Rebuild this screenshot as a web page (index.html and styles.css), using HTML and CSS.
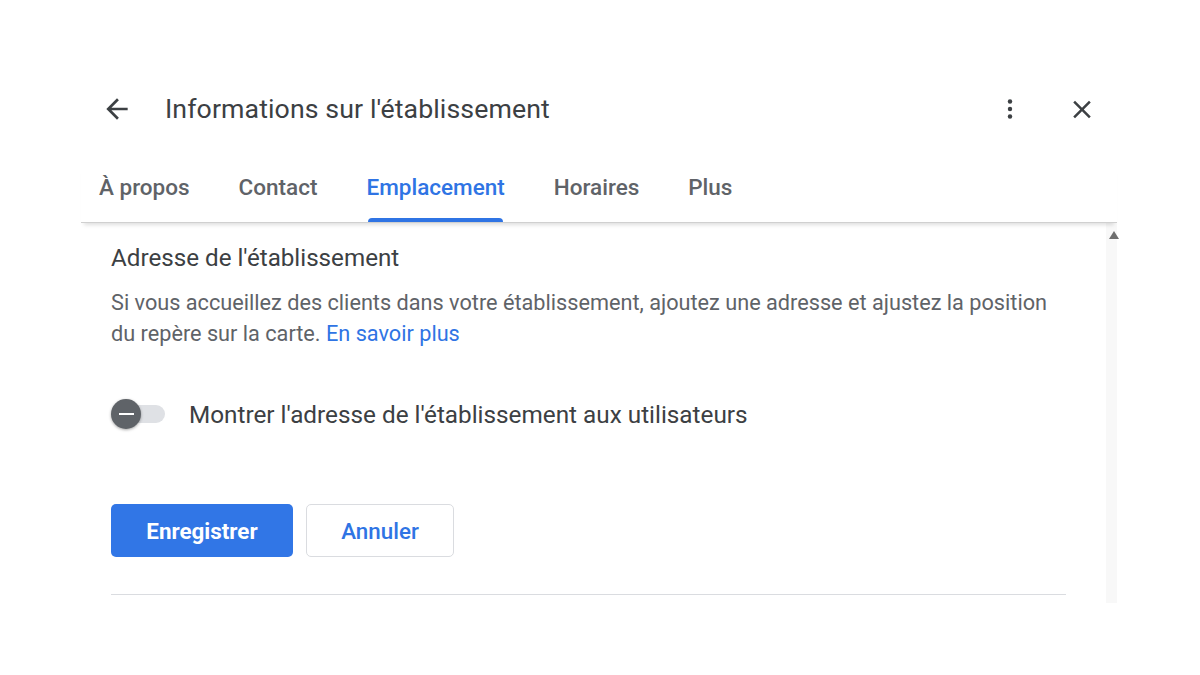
FILE: index.html
```html
<!DOCTYPE html>
<html lang="fr">
<head>
    <meta charset="UTF-8">
    <title>Informations sur l'établissement</title>
    <link rel="stylesheet" href="styles.css">
</head>
<body>
    <div class="dialog">
        <div class="header">
            <button class="icon-btn back" aria-label="Retour">
                <svg width="32" height="32" viewBox="0 0 24 24"><path d="M20 11H7.83l5.59-5.59L12 4l-8 8 8 8 1.41-1.41L7.83 13H20v-2z" fill="#3c4043"/></svg>
            </button>
            <h1 class="title">Informations sur l'établissement</h1>
            <button class="icon-btn more" aria-label="Plus d'options">
                <svg width="28" height="28" viewBox="0 0 24 24"><circle cx="12" cy="5.5" r="1.9" fill="#3c4043"/><circle cx="12" cy="12" r="1.9" fill="#3c4043"/><circle cx="12" cy="18.5" r="1.9" fill="#3c4043"/></svg>
            </button>
            <button class="icon-btn close" aria-label="Fermer">
                <svg width="31" height="31" viewBox="0 0 24 24"><path d="M19 6.41L17.59 5 12 10.59 6.41 5 5 6.41 10.59 12 5 17.59 6.41 19 12 13.41 17.59 19 19 17.59 13.41 12z" fill="#3c4043"/></svg>
            </button>
        </div>

        <div class="tabs">
            <div class="tab">À propos</div>
            <div class="tab">Contact</div>
            <div class="tab active">Emplacement</div>
            <div class="tab">Horaires</div>
            <div class="tab">Plus</div>
        </div>

        <div class="body">
            <div class="content">
                <h2 class="section-title">Adresse de l'établissement</h2>
                <p class="desc">Si vous accueillez des clients dans votre établissement, ajoutez une adresse et ajustez la position du repère sur la carte. <a href="#">En savoir plus</a></p>

                <div class="toggle-row">
                    <div class="switch">
                        <div class="track"></div>
                        <div class="knob"><span></span></div>
                    </div>
                    <span class="toggle-label">Montrer l'adresse de l'établissement aux utilisateurs</span>
                </div>

                <div class="actions">
                    <button class="btn primary">Enregistrer</button>
                    <button class="btn outline">Annuler</button>
                </div>

                <div class="divider"></div>
            </div>
            <div class="scrollbar">
                <div class="arrow-up"></div>
            </div>
        </div>
    </div>
</body>
</html>
```

FILE: styles.css
```css
* {
    margin: 0;
    padding: 0;
    box-sizing: border-box;
}

body {
    font-family: Roboto, "Noto Sans", Arial, sans-serif;
    background: #fff;
    color: #3c4043;
}

.dialog {
    width: 1036px;
    margin: 0 0 0 81px;
    padding-top: 89px;
}

.header {
    display: flex;
    align-items: center;
    height: 40px;
}

.icon-btn {
    background: none;
    border: none;
    display: flex;
    align-items: center;
    justify-content: center;
    cursor: pointer;
}

.back {
    margin-left: 19px;
    width: 34px;
}

.title {
    font-size: 26.7px;
    font-weight: 400;
    color: #3c4043;
    margin-left: 31px;
    flex-grow: 1;
    letter-spacing: 0.1px;
}

.more {
    width: 30px;
    margin-right: 42px;
}

.close {
    width: 30px;
    margin-right: 20px;
}

.tabs {
    display: flex;
    gap: 49px;
    padding-left: 18px;
    margin-top: 37px;
    height: 57px;
    border-bottom: 1px solid #d0d0d0;
    box-shadow: 0 5px 4px -3px rgba(0,0,0,0.13);
    position: relative;
    z-index: 1;
}

.tab {
    font-size: 22.5px;
    font-weight: 500;
    color: #5f6368;
    line-height: 42px;
    height: 56px;
    position: relative;
}

.tab.active {
    color: #2f74e4;
}

.tab.active::after {
    content: "";
    position: absolute;
    left: 2px;
    right: 2px;
    bottom: 0;
    height: 4px;
    background: #2f74e4;
    border-radius: 4px 4px 0 0;
}

.body {
    display: flex;
    height: 380px;
}

.content {
    flex-grow: 1;
    padding: 20px 40px 0 30px;
}

.section-title {
    font-size: 24.2px;
    font-weight: 400;
    line-height: 30px;
    color: #3c4043;
}

.desc {
    margin-top: 14px;
    font-size: 21.7px;
    line-height: 31px;
    color: #5f6368;
}

.desc a {
    color: #2f74e4;
    text-decoration: none;
}

.toggle-row {
    display: flex;
    align-items: center;
    height: 36px;
    margin-top: 47px;
}

.switch {
    position: relative;
    width: 56px;
    height: 32px;
}

.track {
    position: absolute;
    left: 14px;
    top: 7px;
    width: 40px;
    height: 18px;
    border-radius: 9px;
    background: #dfe1e5;
}

.knob {
    position: absolute;
    left: 0;
    top: 1px;
    width: 30px;
    height: 30px;
    border-radius: 50%;
    background: #5f6368;
    box-shadow: 0 1px 3px rgba(0,0,0,0.35);
    display: flex;
    align-items: center;
    justify-content: center;
}

.knob span {
    width: 15px;
    height: 2px;
    background: #fff;
}

.toggle-label {
    margin-left: 22px;
    font-size: 24.3px;
    color: #3c4043;
}

.actions {
    display: flex;
    gap: 13px;
    margin-top: 72px;
}

.btn {
    height: 53px;
    border-radius: 5px;
    font-family: Roboto, Arial, sans-serif;
    font-size: 22.4px;
    cursor: pointer;
}

.primary {
    width: 182px;
    background: #3176e6;
    border: none;
    color: #fff;
    font-weight: 700;
}

.outline {
    width: 148px;
    background: #fff;
    border: 1px solid #dadce0;
    color: #2f74e4;
    font-weight: 500;
}

.divider {
    margin-top: 37px;
    height: 1px;
    background: #dadce0;
}

.scrollbar {
    width: 15px;
    background: #f8f8f8;
    position: relative;
}

.arrow-up {
    position: absolute;
    top: 8px;
    left: 3px;
    width: 0;
    height: 0;
    border-left: 5px solid transparent;
    border-right: 5px solid transparent;
    border-bottom: 8px solid #6e6e6e;
}
```
